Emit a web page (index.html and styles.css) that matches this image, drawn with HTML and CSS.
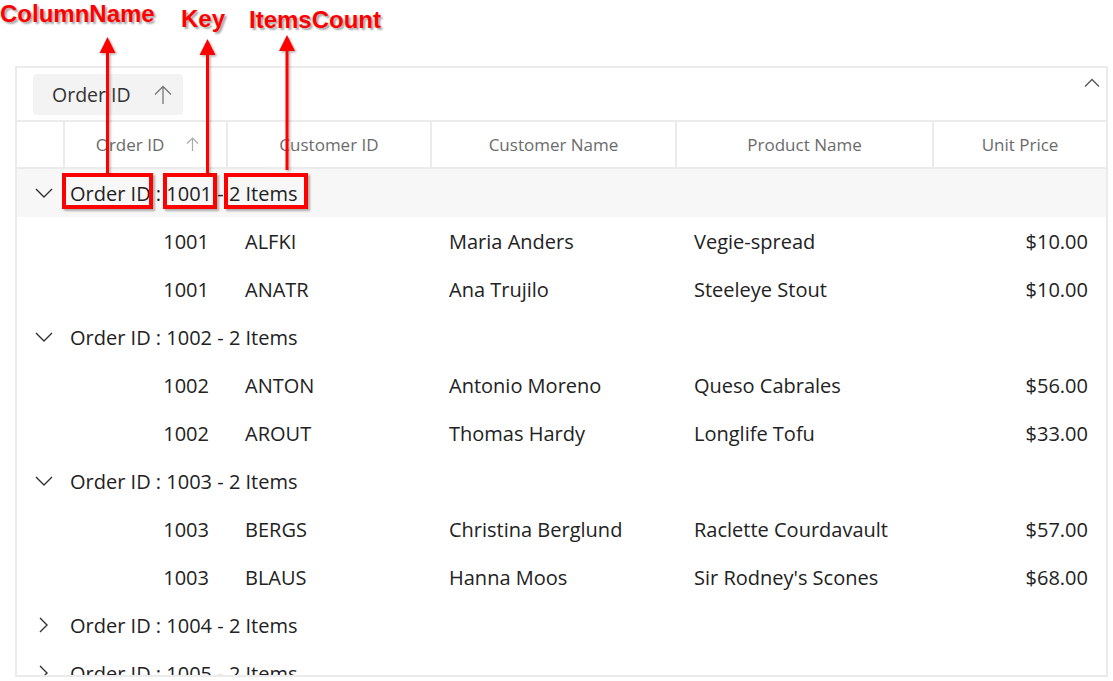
FILE: index.html
```html
<!DOCTYPE html>
<html>
<head>
<meta charset="utf-8">
<link rel="stylesheet" href="styles.css">
</head>
<body>
<div class="page">
  <div class="grid">
    <div class="drop-area">
      <div class="chip"><span>Order ID</span>
        <svg class="chip-arrow" width="18" height="19" viewBox="0 0 18 19"><path d="M9 1.5V19M1 9.5L9 1.5L17 9.5" fill="none" stroke="#777" stroke-width="1.3"/></svg>
      </div>
      <svg class="collapse" width="16" height="9" viewBox="0 0 16 9"><path d="M1 8.5L8 1.5L15 8.5" fill="none" stroke="#555" stroke-width="1.3"/></svg>
    </div>
    <div class="header">
      <div class="hcell indent"></div>
      <div class="hcell"><span>Order ID</span>
        <svg class="sort" width="13" height="14" viewBox="0 0 13 14"><path d="M6.5 1V14M1 6.5L6.5 1L12 6.5" fill="none" stroke="#aaa" stroke-width="1.2"/></svg>
      </div>
      <div class="hcell">Customer ID</div>
      <div class="hcell">Customer Name</div>
      <div class="hcell">Product Name</div>
      <div class="hcell last">Unit Price</div>
    </div>
    <div class="body">
      <div class="group-row active">
        <svg class="caret" width="18" height="10" viewBox="0 0 18 10"><path d="M1 1L9 9L17 1" fill="none" stroke="#333" stroke-width="1.4"/></svg>
        <span>Order ID : 1001 - 2 Items</span>
      </div>
      <div class="row"><div></div><div class="num id">1001</div><div>ALFKI</div><div>Maria Anders</div><div>Vegie-spread</div><div class="num">$10.00</div></div>
      <div class="row"><div></div><div class="num id">1001</div><div>ANATR</div><div>Ana Trujilo</div><div>Steeleye Stout</div><div class="num">$10.00</div></div>
      <div class="group-row">
        <svg class="caret" width="18" height="10" viewBox="0 0 18 10"><path d="M1 1L9 9L17 1" fill="none" stroke="#333" stroke-width="1.4"/></svg>
        <span>Order ID : 1002 - 2 Items</span>
      </div>
      <div class="row"><div></div><div class="num id">1002</div><div>ANTON</div><div>Antonio Moreno</div><div>Queso Cabrales</div><div class="num">$56.00</div></div>
      <div class="row"><div></div><div class="num id">1002</div><div>AROUT</div><div>Thomas Hardy</div><div>Longlife Tofu</div><div class="num">$33.00</div></div>
      <div class="group-row">
        <svg class="caret" width="18" height="10" viewBox="0 0 18 10"><path d="M1 1L9 9L17 1" fill="none" stroke="#333" stroke-width="1.4"/></svg>
        <span>Order ID : 1003 - 2 Items</span>
      </div>
      <div class="row"><div></div><div class="num id">1003</div><div>BERGS</div><div>Christina Berglund</div><div>Raclette Courdavault</div><div class="num">$57.00</div></div>
      <div class="row"><div></div><div class="num id">1003</div><div>BLAUS</div><div>Hanna Moos</div><div>Sir Rodney's Scones</div><div class="num">$68.00</div></div>
      <div class="group-row">
        <svg class="caret right" width="18" height="16" viewBox="0 0 18 16"><path d="M5 1L12 8L5 15" fill="none" stroke="#333" stroke-width="1.4"/></svg>
        <span>Order ID : 1004 - 2 Items</span>
      </div>
      <div class="group-row">
        <svg class="caret right" width="18" height="16" viewBox="0 0 18 16"><path d="M5 1L12 8L5 15" fill="none" stroke="#333" stroke-width="1.4"/></svg>
        <span>Order ID : 1005 - 2 Items</span>
      </div>
    </div>
  </div>

  <div class="label lbl-col">ColumnName</div>
  <div class="label lbl-key">Key</div>
  <div class="label lbl-count">ItemsCount</div>
  <div class="box box-col"></div>
  <div class="box box-key"></div>
  <div class="box box-count"></div>
  <svg class="arrows" width="1113" height="681" viewBox="0 0 1113 681">
    <g fill="#ff0000" filter="url(#sh)">
      <rect x="106" y="50" width="3" height="123"/>
      <polygon points="107.5,37 99.5,53 115.5,53"/>
      <rect x="206" y="52" width="3" height="121"/>
      <polygon points="207.5,39 199.5,55 215.5,55"/>
      <rect x="285.5" y="48" width="3" height="122"/>
      <polygon points="287,35 279,51 295,51"/>
    </g>
    <defs>
      <filter id="sh" x="-50%" y="-10%" width="200%" height="120%">
        <feDropShadow dx="1.5" dy="1.5" stdDeviation="1" flood-color="#000" flood-opacity="0.3"/>
      </filter>
    </defs>
  </svg>
</div>
</body>
</html>
```

FILE: styles.css
```css
html, body {
  margin: 0;
  padding: 0;
  background: #fff;
}
.page {
  position: relative;
  width: 1113px;
  height: 681px;
  overflow: hidden;
  font-family: "Open Sans", "Noto Sans", sans-serif;
  color: #222;
}
.grid {
  margin: 66px 0 0 15px;
  width: 1093px;
  height: 611px;
  box-sizing: border-box;
  border: 2px solid #ebebeb;
  overflow: hidden;
}
.drop-area {
  height: 54px;
  box-sizing: border-box;
  border-bottom: 2px solid #ebebeb;
  display: flex;
  align-items: flex-start;
  padding: 6px 0 0 16px;
}
.chip {
  height: 41px;
  width: 150px;
  box-sizing: border-box;
  background: #f3f3f3;
  border-radius: 4px;
  display: flex;
  align-items: center;
  padding-left: 19px;
  font-size: 19.5px;
  color: #333;
}
.chip-arrow {
  margin-left: 23px;
  margin-top: -1px;
}
.collapse {
  margin-left: auto;
  margin-right: 6px;
  margin-top: 4px;
}
.header {
  display: grid;
  grid-template-columns: 48px 163px 204px 245px 257px 172px;
  height: 47px;
  box-sizing: border-box;
  border-bottom: 2px solid #ebebeb;
}
.hcell {
  border-right: 2px solid #ebebeb;
  display: flex;
  align-items: center;
  justify-content: center;
  font-size: 17px;
  color: #6b6b6b;
}
.hcell.last {
  border-right: none;
}
.sort {
  margin-left: 22px;
  margin-right: -4px;
  margin-top: -2px;
}
.group-row {
  height: 48px;
  display: flex;
  align-items: center;
  font-size: 20px;
  color: #222;
  padding-left: 18px;
}
.group-row.active {
  background: #f7f7f7;
}
.caret {
  margin-right: 17px;
}
.row {
  display: grid;
  grid-template-columns: 48px 163px 204px 245px 257px 172px;
  height: 48px;
  align-items: center;
  font-size: 20px;
  color: #222;
}
.row > div {
  padding: 0 17px;
  white-space: nowrap;
}
.row > div:first-child {
  padding: 0;
}
.row > .num {
  text-align: right;
  padding-right: 18px;
}
.row > .num.id {
  padding-right: 19px;
}
.label {
  position: absolute;
  font-family: "Liberation Sans", Arial, sans-serif;
  font-weight: bold;
  font-size: 24px;
  line-height: 28px;
  color: #ff0000;
  text-shadow: 2px 2px 2px rgba(0, 0, 0, 0.35);
}
.lbl-col { left: 0; top: 0; }
.lbl-key { left: 181px; top: 5px; }
.lbl-count { left: 249px; top: 6px; }
.box {
  position: absolute;
  border: 4px solid #ff0000;
  box-sizing: border-box;
  box-shadow: 2px 2px 2px rgba(0, 0, 0, 0.3);
}
.box-col { left: 62px; top: 173px; width: 91px; height: 36px; }
.box-key { left: 163px; top: 173px; width: 54px; height: 36px; }
.box-count { left: 224px; top: 173px; width: 84px; height: 36px; }
.arrows {
  position: absolute;
  left: 0;
  top: 0;
}
```
